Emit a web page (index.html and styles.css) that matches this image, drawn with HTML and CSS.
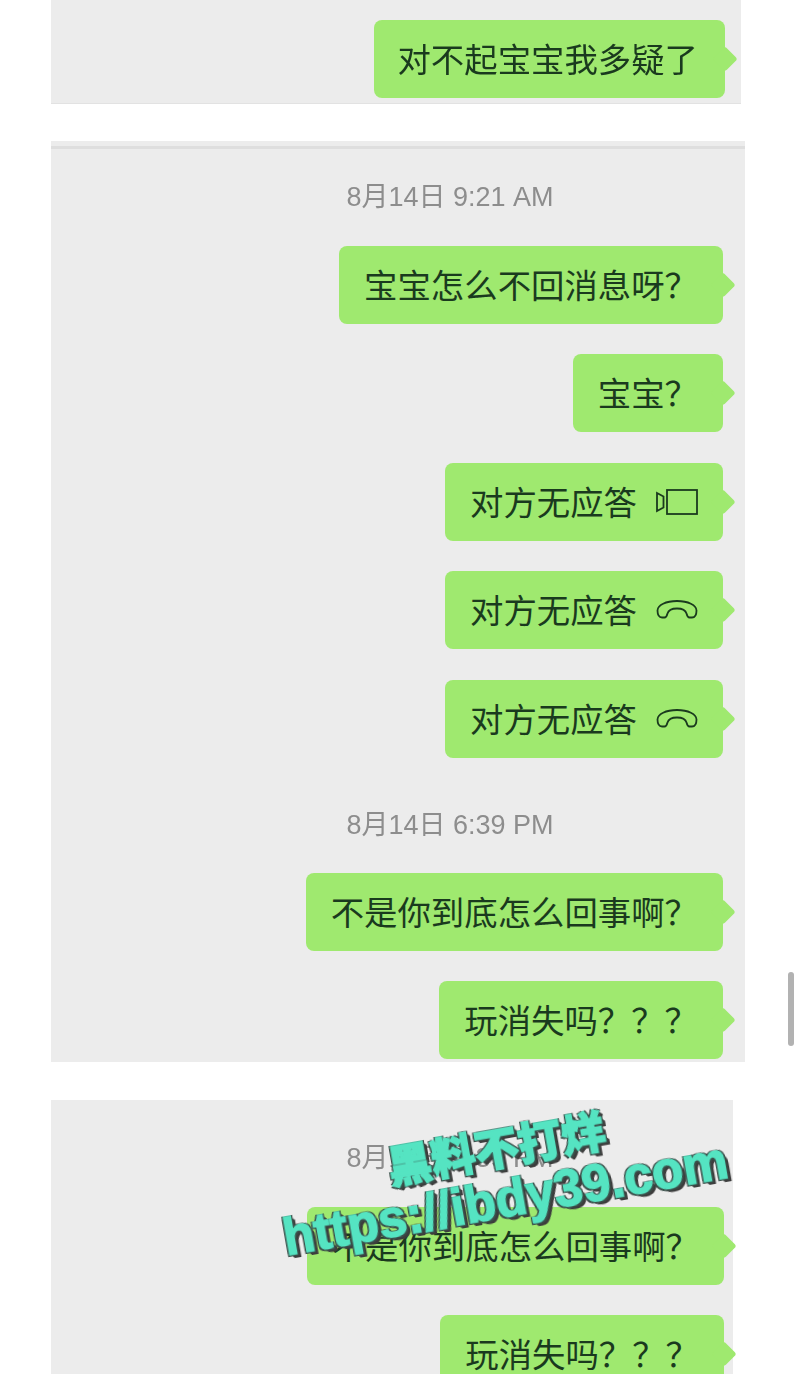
FILE: index.html
```html
<!DOCTYPE html>
<html lang="zh">
<head>
<meta charset="utf-8">
<title>聊天记录</title>
<link rel="stylesheet" href="styles.css">
</head>
<body>
<main class="page">
  <section class="panel panel-a">
    <div class="bubble">对不起宝宝我多疑了</div>
  </section>

  <section class="panel panel-b">
    <div class="rule"></div>
    <div class="time time-first">8月14日 9:21 AM</div>
    <div class="bubble">宝宝怎么不回消息呀？</div>
    <div class="bubble">宝宝？</div>
    <div class="bubble">对方无应答
      <svg class="call-icon" viewBox="0 0 42 26" aria-hidden="true">
        <rect x="11" y="1" width="30" height="24"/>
        <path d="M1 4 L7.500 7.500 V18.500 L1 22 Z"/>
      </svg>
    </div>
    <div class="bubble">对方无应答
      <svg class="call-icon" viewBox="0 0 42 26" aria-hidden="true">
        <path d="M1.500 13.500 C1.500 8 10 4 21 4 C32 4 40.500 8 40.500 13.500 C40.500 17.500 39 20.500 36 20.500 L33.500 20.500 C31.500 20.500 31 18.500 30.500 16.500 C29.500 13 26 11.500 21 11.500 C16 11.500 12.500 13 11.500 16.500 C11 18.500 10.500 20.500 8.500 20.500 L6 20.500 C3 20.500 1.500 17.500 1.500 13.500 Z"/>
      </svg>
    </div>
    <div class="bubble">对方无应答
      <svg class="call-icon" viewBox="0 0 42 26" aria-hidden="true">
        <path d="M1.500 13.500 C1.500 8 10 4 21 4 C32 4 40.500 8 40.500 13.500 C40.500 17.500 39 20.500 36 20.500 L33.500 20.500 C31.500 20.500 31 18.500 30.500 16.500 C29.500 13 26 11.500 21 11.500 C16 11.500 12.500 13 11.500 16.500 C11 18.500 10.500 20.500 8.500 20.500 L6 20.500 C3 20.500 1.500 17.500 1.500 13.500 Z"/>
      </svg>
    </div>
    <div class="time time-later">8月14日 6:39 PM</div>
    <div class="bubble">不是你到底怎么回事啊？</div>
    <div class="bubble">玩消失吗？？？</div>
  </section>

  <section class="panel panel-c">
    <div class="time">8月14日 6:39 PM</div>
    <div class="bubble">不是你到底怎么回事啊？</div>
    <div class="bubble">玩消失吗？？？</div>
  </section>

  <div class="scrollbar"></div>

  <div class="watermark">
    <div class="wm-cn">黑料不打烊</div>
    <div class="wm-url">https://ibdy39.com</div>
  </div>
</main>
</body>
</html>
```

FILE: styles.css
```css
* { box-sizing: border-box; }

html, body {
  margin: 0;
  background: #fff;
}

.page {
  position: relative;
  width: 800px;
  height: 1374px;
  overflow: hidden;
  display: flex;
  flex-direction: column;
  padding-left: 51px;
  font-family: "Liberation Sans", "Noto Sans CJK SC", sans-serif;
  filter: blur(0.35px);
}

.panel {
  display: flex;
  flex-direction: column;
  align-items: flex-end;
  gap: 30.6px;
  background: #ececec;
  flex: none;
}

.panel-a {
  width: 690px;
  height: 104px;
  padding: 20px 16px 0 0;
  border-bottom: 1px solid #e2e2e2;
}

.panel-a .bubble {
  padding: 0 27px 3px 23px;
}

.panel-b {
  width: 694px;
  height: 921px;
  margin-top: 37px;
  padding-right: 22px;
}

.panel-c {
  width: 682px;
  height: 400px;
  margin-top: 38px;
  padding: 43px 9px 0 0;
}

.rule {
  align-self: stretch;
  height: 3px;
  margin: 5px -22px 0 0;
  background: #dedede;
}

.time {
  align-self: stretch;
  height: 30px;
  margin-bottom: 3px;
  padding-left: 125px;
  text-align: center;
  font-size: 27px;
  line-height: 30px;
  color: #8d8d8d;
}

.panel-b .time { padding-left: 126px; }

.time-first { margin-top: 2px; margin-bottom: 3.4px; }
.time-later { margin-top: 21px; margin-bottom: 2.4px; }

.bubble {
  position: relative;
  display: flex;
  align-items: center;
  flex: none;
  height: 78px;
  padding: 0 25px 3px;
  border-radius: 8px;
  background: #9fe96f;
  color: #1a3a1e;
  font-size: 33.4px;
  white-space: nowrap;
}

.bubble::after {
  content: "";
  position: absolute;
  top: 50%;
  right: -9px;
  width: 18px;
  height: 18px;
  margin-top: -9px;
  background: #9fe96f;
  border-radius: 3px;
  transform: rotate(45deg);
}

.call-icon {
  width: 42px;
  height: 26px;
  margin: 3px 0 0 19px;
  fill: none;
  stroke: #1a3a1e;
  stroke-width: 1.8;
  flex: none;
}

.scrollbar {
  position: absolute;
  left: 788px;
  top: 972px;
  width: 6px;
  height: 74px;
  border-radius: 3px;
  background: #b2b2b2;
}

.watermark {
  position: absolute;
  left: 266px;
  top: 1121px;
  width: 470px;
  transform: rotate(-10deg);
  text-align: center;
  font-weight: 700;
  color: #55e4c2;
  -webkit-text-stroke: 1.5px #55e4c2;
  text-shadow:
    -2px -1.500px 0 #3a4f4a,
    2px -1.500px 0 #3a4f4a,
    -2px 2px 0 #3a4f4a,
    2px 2px 0 #3a4f4a,
    3px 3px 0 #3d3d3d,
    4px 4px 0 #3d3d3d;
  white-space: nowrap;
}

.wm-cn {
  font-size: 44px;
  line-height: 50px;
  font-family: "Noto Sans CJK SC", sans-serif;
  font-weight: 900;
}

.wm-url {
  font-size: 51px;
  line-height: 58px;
}
```
